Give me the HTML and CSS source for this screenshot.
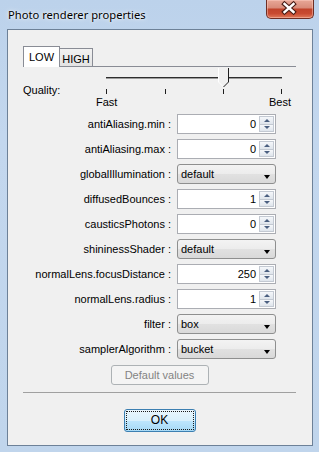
FILE: index.html
```html
<!DOCTYPE html>
<html>
<head>
<meta charset="utf-8">
<title>Photo renderer properties</title>
<link rel="stylesheet" href="styles.css">
</head>
<body>
<div class="window">
  <div class="titlebar">
    <span class="title">Photo renderer properties</span>
    <div class="close">
      <svg width="48" height="19" viewBox="0 0 48 19">
        <path d="M18.5 5 L27.5 13 M27.5 5 L18.5 13" stroke="#4a1d16" stroke-width="4.6" stroke-linecap="square" fill="none"/>
        <path d="M18.5 5 L27.5 13 M27.5 5 L18.5 13" stroke="#ffffff" stroke-width="2.4" stroke-linecap="square" fill="none"/>
      </svg>
    </div>
  </div>
  <div class="client">
    <div class="tabs">
      <div class="tab tab-active">LOW</div>
      <div class="tab tab-idle">HIGH</div>
    </div>
    <div class="pane">
      <div class="quality">
        <span class="qlabel">Quality:</span>
        <div class="slider">
          <svg class="track" width="195" height="29" viewBox="0 0 195 29">
            <path d="M10 10.5 H122 M133 10.5 H186" stroke="#2e2e2e" stroke-width="1" fill="none"/>
            <path d="M10 11.5 H122 M133 11.5 H186" stroke="#9c9c9c" stroke-width="1" fill="none"/>
            <path d="M122.5 1 V15 L127.5 20" stroke="#ffffff" stroke-width="1" fill="none"/>
            <path d="M132.5 1 V15 L127.5 20" stroke="#1e1e1e" stroke-width="1" fill="none"/>
            <path d="M10.5 22 V27 M69.5 22 V27 M127.5 22 V27 M185.5 22 V27" stroke="#1e1e1e" stroke-width="1" fill="none"/>
          </svg>
          <div class="ends"><span>Fast</span><span>Best</span></div>
        </div>
      </div>
      <div class="form">
        <label class="lbl">antiAliasing.min :</label>
        <div class="spin"><span class="val">0</span><span class="btns"><span class="up"></span><span class="dn"></span></span></div>

        <label class="lbl">antiAliasing.max :</label>
        <div class="spin"><span class="val">0</span><span class="btns"><span class="up"></span><span class="dn"></span></span></div>

        <label class="lbl">globalIllumination :</label>
        <div class="combo"><span>default</span><span class="arrow"></span></div>

        <label class="lbl">diffusedBounces :</label>
        <div class="spin"><span class="val">1</span><span class="btns"><span class="up"></span><span class="dn"></span></span></div>

        <label class="lbl">causticsPhotons :</label>
        <div class="spin"><span class="val">0</span><span class="btns"><span class="up"></span><span class="dn"></span></span></div>

        <label class="lbl">shininessShader :</label>
        <div class="combo"><span>default</span><span class="arrow"></span></div>

        <label class="lbl">normalLens.focusDistance :</label>
        <div class="spin"><span class="val">250</span><span class="btns"><span class="up"></span><span class="dn"></span></span></div>

        <label class="lbl">normalLens.radius :</label>
        <div class="spin"><span class="val">1</span><span class="btns"><span class="up"></span><span class="dn"></span></span></div>

        <label class="lbl">filter :</label>
        <div class="combo"><span>box</span><span class="arrow"></span></div>

        <label class="lbl">samplerAlgorithm :</label>
        <div class="combo"><span>bucket</span><span class="arrow"></span></div>
      </div>
      <div class="defaults"><div class="btn-disabled">Default values</div></div>
    </div>
    <div class="actions">
      <div class="ok"><span class="focus">OK</span></div>
    </div>
  </div>
</div>
</body>
</html>
```

FILE: styles.css
```css
* { box-sizing: border-box; }
html, body { margin: 0; padding: 0; }
body {
  width: 319px;
  height: 452px;
  overflow: hidden;
  background: #bfd4ec;
  font-family: "Liberation Sans", Arial, sans-serif;
  font-size: 11px;
  color: #000;
}
.window {
  width: 319px;
  height: 452px;
  padding: 0 6px 6px 7px;
  background: linear-gradient(180deg, #bcd2eb 0%, #c3d7ee 30%, #c0d5ec 100%);
  display: flex;
  flex-direction: column;
}
.titlebar {
  height: 29px;
  flex: none;
  display: flex;
  align-items: flex-start;
  justify-content: space-between;
  margin-right: -1px;
}
.title {
  padding: 7px 0 0 1px;
  line-height: 16px;
  font-family: "Noto Sans", "Open Sans", sans-serif;
  font-size: 11.2px;
  color: #000;
  text-shadow: 0 0 5px rgba(255,255,255,0.9), 0 0 2px rgba(255,255,255,0.8);
}
.close {
  width: 48px;
  height: 19px;
  border: 1px solid #6e2e24;
  border-top: none;
  border-radius: 0 0 5px 5px;
  background: linear-gradient(180deg, #e8a897 0%, #d98c7a 42%, #c1442b 52%, #c84a30 75%, #e07a5a 100%);
  box-shadow: inset 0 0 0 1px rgba(255,210,200,0.45);
  overflow: hidden;
}
.close svg { display: block; margin: -1px 0 0 -1px; }
.client {
  flex: 1;
  border: 1px solid #6d8198;
  background: #f0f0f0;
  padding: 16px 16px 13px 15px;
  display: flex;
  flex-direction: column;
}
.tabs {
  display: flex;
  align-items: flex-end;
  height: 21px;
  margin-bottom: -1px;
  position: relative;
  z-index: 1;
}
.tab {
  border: 1px solid #898c95;
  border-bottom: none;
  text-align: center;
  line-height: 14px;
  padding-top: 3px;
}
.tab-active {
  width: 37px;
  height: 21px;
  background: #ffffff;
}
.tab-idle {
  width: 33px;
  height: 18px;
  border-left: none;
  margin-bottom: 1px;
  background: linear-gradient(180deg, #f2f2f2, #e3e3e3);
}
.pane {
  border-top: 1px solid #898c95;
  border-bottom: 1px solid #a0a0a0;
  padding: 0 0 7px 0;
}
.quality { display: flex; }
.qlabel {
  width: 73px;
  padding-top: 17px;
  line-height: 13px;
}
.slider { width: 195px; }
.track { display: block; }
.ends {
  display: flex;
  justify-content: space-between;
  line-height: 13px;
}
.form {
  display: grid;
  grid-template-columns: 148px 99px;
  grid-auto-rows: 20px;
  column-gap: 6px;
  row-gap: 5px;
  margin-top: 5px;
}
.lbl {
  text-align: right;
  line-height: 20px;
  white-space: nowrap;
}
.spin {
  display: flex;
  height: 20px;
  border: 1px solid #abadb3;
  background: #ffffff;
}
.val {
  flex: 1;
  text-align: right;
  line-height: 18px;
  padding-right: 3px;
}
.btns {
  width: 16px;
  display: flex;
  flex-direction: column;
  padding: 1px 1px 1px 0;
  gap: 0;
}
.up, .dn {
  flex: 1;
  border: 1px solid #c3c9d2;
  background: linear-gradient(180deg, #f5f7fa, #dfe5ec);
  display: flex;
  align-items: center;
  justify-content: center;
}
.dn { border-top: none; }
.up::after {
  content: "";
  border-left: 3px solid transparent;
  border-right: 3px solid transparent;
  border-bottom: 3px solid #4a5f80;
}
.dn::after {
  content: "";
  border-left: 3px solid transparent;
  border-right: 3px solid transparent;
  border-top: 3px solid #4a5f80;
}
.combo {
  display: flex;
  align-items: center;
  justify-content: space-between;
  height: 20px;
  border: 1px solid #8e8f8f;
  border-radius: 3px;
  background: linear-gradient(180deg, #f3f3f3 0%, #ececec 50%, #e1e1e1 51%, #d9d9d9 100%);
  padding: 0 5px 0 3px;
  line-height: 18px;
}
.arrow {
  width: 0;
  height: 0;
  margin-top: 5px;
  border-left: 3.5px solid transparent;
  border-right: 3.5px solid transparent;
  border-top: 4px solid #000;
}
.defaults {
  display: flex;
  justify-content: center;
  margin-top: 6px;
}
.btn-disabled {
  width: 98px;
  height: 20px;
  border: 1px solid #adb2b5;
  border-radius: 3px;
  background: #f4f4f4;
  color: #838383;
  text-align: center;
  line-height: 18px;
}
.actions {
  display: flex;
  justify-content: center;
  margin-top: 16px;
}
.ok {
  width: 72px;
  height: 23px;
  border: 1px solid #3c7fb1;
  border-radius: 3px;
  padding: 1px;
  background: linear-gradient(180deg, #eaf6fd 0%, #d9f0fc 50%, #bee6fd 51%, #a7d9f5 100%);
}
.focus {
  display: block;
  height: 100%;
  border: 1px dotted #1a1a1a;
  text-align: center;
  line-height: 17px;
  font-size: 12px;
}
```
